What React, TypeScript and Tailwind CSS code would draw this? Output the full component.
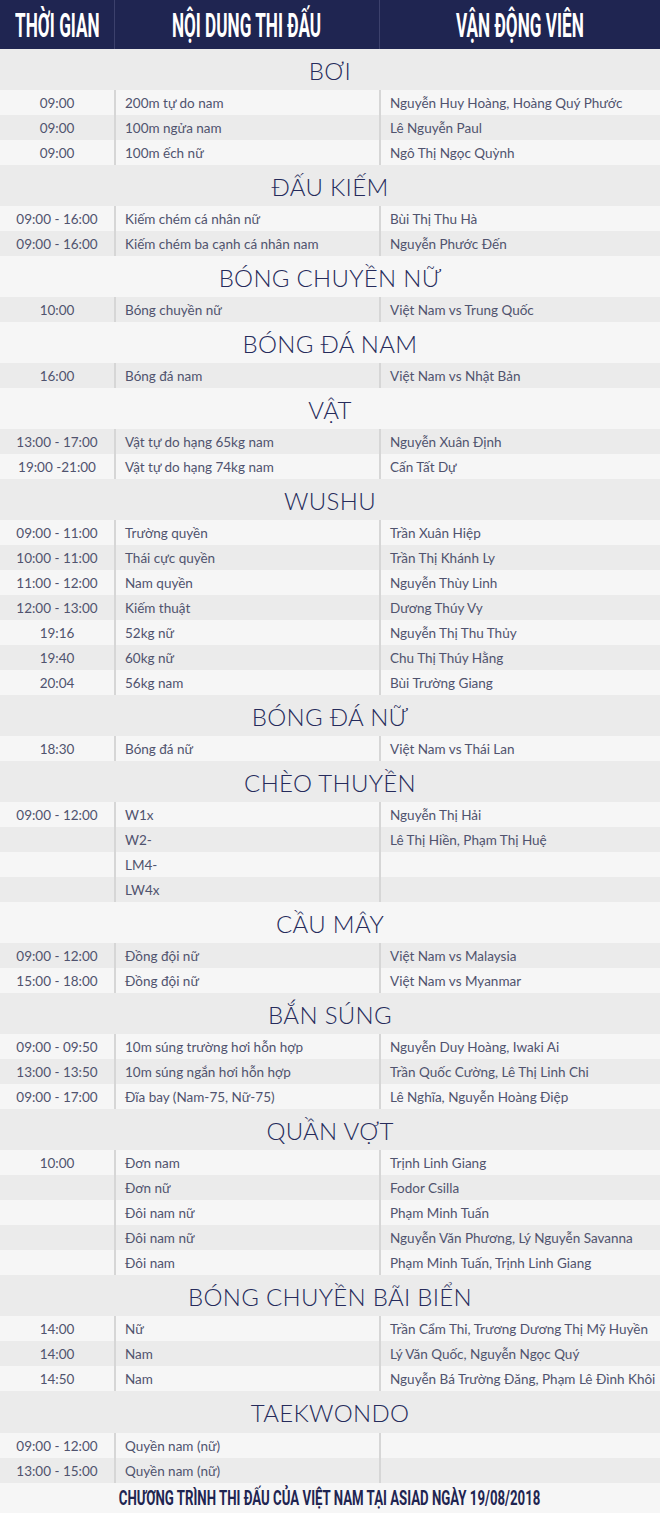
import React from "react";

type Row = [string, string, string];
type Section = { title: string; dark: boolean; rows: Row[] };

const sections: Section[] = [
  {
    title: "BƠI",
    dark: true,
    rows: [
      ["09:00", "200m tự do nam", "Nguyễn Huy Hoàng, Hoàng Quý Phước"],
      ["09:00", "100m ngửa nam", "Lê Nguyễn Paul"],
      ["09:00", "100m ếch nữ", "Ngô Thị Ngọc Quỳnh"],
    ],
  },
  {
    title: "ĐẤU KIẾM",
    dark: true,
    rows: [
      ["09:00 - 16:00", "Kiếm chém cá nhân nữ", "Bùi Thị Thu Hà"],
      ["09:00 - 16:00", "Kiếm chém ba cạnh cá nhân nam", "Nguyễn Phước Đến"],
    ],
  },
  {
    title: "BÓNG CHUYỀN NỮ",
    dark: false,
    rows: [["10:00", "Bóng chuyền nữ", "Việt Nam vs Trung Quốc"]],
  },
  {
    title: "BÓNG ĐÁ NAM",
    dark: false,
    rows: [["16:00", "Bóng đá nam", "Việt Nam vs Nhật Bản"]],
  },
  {
    title: "VẬT",
    dark: false,
    rows: [
      ["13:00 - 17:00", "Vật tự do hạng 65kg nam", "Nguyễn Xuân Định"],
      ["19:00 -21:00", "Vật tự do hạng 74kg nam", "Cấn Tất Dự"],
    ],
  },
  {
    title: "WUSHU",
    dark: true,
    rows: [
      ["09:00 - 11:00", "Trường quyền", "Trần Xuân Hiệp"],
      ["10:00 - 11:00", "Thái cực quyền", "Trần Thị Khánh Ly"],
      ["11:00 - 12:00", "Nam quyền", "Nguyễn Thùy Linh"],
      ["12:00 - 13:00", "Kiếm thuật", "Dương Thúy Vy"],
      ["19:16", "52kg nữ", "Nguyễn Thị Thu Thủy"],
      ["19:40", "60kg nữ", "Chu Thị Thúy Hằng"],
      ["20:04", "56kg nam", "Bùi Trường Giang"],
    ],
  },
  {
    title: "BÓNG ĐÁ NỮ",
    dark: true,
    rows: [["18:30", "Bóng đá nữ", "Việt Nam vs Thái Lan"]],
  },
  {
    title: "CHÈO THUYỀN",
    dark: true,
    rows: [
      ["09:00 - 12:00", "W1x", "Nguyễn Thị Hải"],
      ["", "W2-", "Lê Thị Hiền, Phạm Thị Huệ"],
      ["", "LM4-", ""],
      ["", "LW4x", ""],
    ],
  },
  {
    title: "CẦU MÂY",
    dark: false,
    rows: [
      ["09:00 - 12:00", "Đồng đội nữ", "Việt Nam vs Malaysia"],
      ["15:00 - 18:00", "Đồng đội nữ", "Việt Nam vs Myanmar"],
    ],
  },
  {
    title: "BẮN SÚNG",
    dark: true,
    rows: [
      ["09:00 - 09:50", "10m súng trường hơi hỗn hợp", "Nguyễn Duy Hoàng, Iwaki Ai"],
      ["13:00 - 13:50", "10m súng ngắn hơi hỗn hợp", "Trần Quốc Cường, Lê Thị Linh Chi"],
      ["09:00 - 17:00", "Đĩa bay (Nam-75, Nữ-75)", "Lê Nghĩa, Nguyễn Hoàng Điệp"],
    ],
  },
  {
    title: "QUẦN VỢT",
    dark: true,
    rows: [
      ["10:00", "Đơn nam", "Trịnh Linh Giang"],
      ["", "Đơn nữ", "Fodor Csilla"],
      ["", "Đôi nam nữ", "Phạm Minh Tuấn"],
      ["", "Đôi nam nữ", "Nguyễn Văn Phương, Lý Nguyễn Savanna"],
      ["", "Đôi nam", "Phạm Minh Tuấn, Trịnh Linh Giang"],
    ],
  },
  {
    title: "BÓNG CHUYỀN BÃI BIỂN",
    dark: true,
    rows: [
      ["14:00", "Nữ", "Trần Cẩm Thi, Trương Dương Thị Mỹ Huyền"],
      ["14:00", "Nam", "Lý Văn Quốc, Nguyễn Ngọc Quý"],
      ["14:50", "Nam", "Nguyễn Bá Trường Đăng, Phạm Lê Đình Khôi"],
    ],
  },
  {
    title: "TAEKWONDO",
    dark: true,
    rows: [
      ["09:00 - 12:00", "Quyền nam (nữ)", ""],
      ["13:00 - 15:00", "Quyền nam (nữ)", ""],
    ],
  },
];

const DARK = "bg-[#ebebeb]";
const LIGHT = "bg-[#f6f6f6]";

function HeadCell({ children, first }: { children: React.ReactNode; first?: boolean }) {
  return (
    <div
      className={`flex items-center justify-center overflow-visible ${
        first ? "" : "border-l border-[#3c416c]"
      }`}
    >
      <span className="inline-block whitespace-nowrap font-['Roboto',sans-serif] font-bold text-[33px] leading-none text-white scale-x-[0.52] pt-[1px]">
        {children}
      </span>
    </div>
  );
}

export default function App() {
  return (
    <div className="w-[660px] font-['Lato',sans-serif] text-[#50536e]">
      <div className="grid grid-cols-[114px_265px_281px] h-[49px] bg-[#1f2551]">
        <HeadCell first>THỜI GIAN</HeadCell>
        <HeadCell>NỘI DUNG THI ĐẤU</HeadCell>
        <HeadCell>VẬN ĐỘNG VIÊN</HeadCell>
      </div>
      {sections.map((s, si) => (
        <div key={s.title}>
          <div
            className={`${si === sections.length - 1 ? "h-[42px]" : "h-[41px]"} flex items-center justify-center ${
              s.dark ? DARK : LIGHT
            }`}
          >
            <span className="text-[24px] font-light text-[#262b5b] leading-none tracking-[0.3px] pt-[2px]">
              {s.title}
            </span>
          </div>
          {s.rows.map((r, i) => {
            const light = s.dark ? i % 2 === 0 : i % 2 === 1;
            return (
              <div
                key={i}
                className={`grid grid-cols-[114px_265px_281px] h-[25px] text-[13.5px] leading-none ${
                  light ? LIGHT : DARK
                }`}
              >
                <div className="flex items-center justify-center whitespace-nowrap pt-[2px]">{r[0]}</div>
                <div className="flex items-center border-l-2 border-[#d6d6d6] pl-[9px] pt-[2px] whitespace-nowrap">
                  {r[1]}
                </div>
                <div className="flex items-center border-l-2 border-[#d6d6d6] pl-[9px] pt-[2px] whitespace-nowrap">
                  {r[2]}
                </div>
              </div>
            );
          })}
        </div>
      ))}
      <div className={`h-[30px] flex items-center justify-center ${LIGHT}`}>
        <span className="inline-block whitespace-nowrap font-['Roboto',sans-serif] font-bold text-[21px] leading-none text-[#1f2551] scale-x-[0.63]">
          CHƯƠNG TRÌNH THI ĐẤU CỦA VIỆT NAM TẠI ASIAD NGÀY 19/08/2018
        </span>
      </div>
    </div>
  );
}
